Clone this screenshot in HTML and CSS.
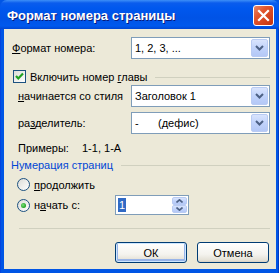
FILE: index.html
```html
<!DOCTYPE html>
<html lang="ru">
<head>
    <meta charset="UTF-8">
    <meta name="viewport" content="width=device-width, initial-scale=1.0">
    <title>Формат номера страницы</title>
    <link rel="stylesheet" href="styles.css">
</head>
<body>

    <div class="window">
        <div class="titlebar">
            <span class="title">Формат номера страницы</span>
            <span class="close-btn">
                <svg width="13" height="13" viewBox="0 0 13 13">
                    <path d="M2 2 L11 11 M11 2 L2 11" stroke="#fff" stroke-width="2.2" stroke-linecap="square"/>
                </svg>
            </span>
        </div>

        <div class="frame">
            <div class="client">

                <div class="row row-format">
                    <span class="label"><u>Ф</u>ормат номера:</span>
                    <div class="combo">
                        <span class="combo-text">1, 2, 3, ...</span>
                        <span class="combo-btn">
                            <svg width="9" height="6" viewBox="0 0 9 6"><path d="M1 1 L4.5 4.5 L8 1" fill="none" stroke="#4d6185" stroke-width="2"/></svg>
                        </span>
                    </div>
                </div>

                <div class="row row-check">
                    <span class="checkbox">
                        <svg width="11" height="11" viewBox="0 0 11 11"><path d="M2 5 L4.3 7.5 L9 2.5" fill="none" stroke="#21a121" stroke-width="2.2"/></svg>
                    </span>
                    <span class="check-text">Включить номер <u>г</u>лавы</span>
                    <span class="etched"></span>
                </div>

                <div class="row row-style">
                    <span class="label label-indent"><u>н</u>ачинается со стиля</span>
                    <div class="combo">
                        <span class="combo-text">Заголовок 1</span>
                        <span class="combo-btn">
                            <svg width="9" height="6" viewBox="0 0 9 6"><path d="M1 1 L4.5 4.5 L8 1" fill="none" stroke="#4d6185" stroke-width="2"/></svg>
                        </span>
                    </div>
                </div>

                <div class="row row-sep">
                    <span class="label label-indent">ра<u>з</u>делитель:</span>
                    <div class="combo">
                        <span class="combo-text"><span class="dash">-</span>(дефис)</span>
                        <span class="combo-btn">
                            <svg width="9" height="6" viewBox="0 0 9 6"><path d="M1 1 L4.5 4.5 L8 1" fill="none" stroke="#4d6185" stroke-width="2"/></svg>
                        </span>
                    </div>
                </div>

                <div class="row row-examples">
                    <span class="examples-label">Примеры:</span>
                    <span>1-1, 1-А</span>
                </div>

                <div class="row row-group">
                    <span class="group-title">Нумерация страниц</span>
                    <span class="etched"></span>
                </div>

                <div class="row row-radio">
                    <span class="radio"></span>
                    <span><u>п</u>родолжить</span>
                </div>

                <div class="row row-radio row-start">
                    <span class="radio radio-on"><span class="dot"></span></span>
                    <span class="radio-label">н<u>а</u>чать с:</span>
                    <div class="spin">
                        <span class="spin-text"><span class="selected">1</span></span>
                        <span class="spin-btns">
                            <span class="spin-btn">
                                <svg width="7" height="4" viewBox="0 0 7 4"><path d="M0.5 3.5 L3.5 0.8 L6.5 3.5" fill="none" stroke="#4d6185" stroke-width="1.6"/></svg>
                            </span>
                            <span class="spin-btn">
                                <svg width="7" height="4" viewBox="0 0 7 4"><path d="M0.5 0.5 L3.5 3.2 L6.5 0.5" fill="none" stroke="#4d6185" stroke-width="1.6"/></svg>
                            </span>
                        </span>
                    </div>
                </div>

                <div class="divider"></div>

                <div class="buttons">
                    <button class="btn btn-default">ОК</button>
                    <button class="btn">Отмена</button>
                </div>

            </div>
        </div>
    </div>

</body>
</html>
```

FILE: styles.css
```css
body {
    margin: 0;
    font-family: "Liberation Sans", Arial, sans-serif;
    font-size: 11px;
    color: #000;
    background: #fff;
}
u {
    text-decoration: underline;
    text-underline-offset: 1px;
}
.window {
    width: 279px;
    height: 273px;
    display: flex;
    flex-direction: column;
    background: #0055e5;
}
.titlebar {
    height: 29px;
    flex: none;
    display: flex;
    align-items: center;
    justify-content: space-between;
    padding: 0 5px 0 7px;
    box-sizing: border-box;
    background: linear-gradient(#3d8ff7 0, #0a5ced 3px, #0058ee 8px, #0053e6 18px, #0059ed 26px, #0046d2 29px);
    border-radius: 7px 7px 0 0;
}
.title {
    color: #fff;
    font-weight: bold;
    font-size: 13px;
    text-shadow: 1px 1px #0a1b7a;
    padding-top: 1px;
}
.close-btn {
    width: 21px;
    height: 21px;
    box-sizing: border-box;
    border: 1px solid #fff;
    border-radius: 3px;
    background: linear-gradient(135deg, #e8886a 0, #e2572f 35%, #d1401b 75%, #c2340e 100%);
    display: flex;
    align-items: center;
    justify-content: center;
    margin-top: 1px;
}
.frame {
    flex: 1;
    display: flex;
    padding: 0 4px 4px 4px;
    background: linear-gradient(90deg, #0831d9 0, #0055e5 1px, #0055e5 calc(100% - 1px), #001ea0 100%);
}
.client {
    flex: 1;
    background: #ece9d8;
    padding: 8px 6px 0 8px;
    display: flex;
    flex-direction: column;
}
.row {
    display: flex;
    align-items: center;
}
.label {
    width: 119px;
    flex: none;
}
.label-indent {
    width: 113px;
    padding-left: 6px;
}
.combo {
    width: 139px;
    height: 22px;
    box-sizing: border-box;
    border: 1px solid #7f9db9;
    background: #fff;
    display: flex;
    align-items: center;
    padding: 1px;
}
.combo-text {
    flex: 1;
    padding-left: 2px;
}
.dash {
    display: inline-block;
    width: 23px;
}
.combo-btn {
    width: 17px;
    height: 18px;
    box-sizing: border-box;
    border: 1px solid #b9cbf3;
    border-radius: 2px;
    background: linear-gradient(#d9e4fd, #c1d3fb 50%, #b4c8f6);
    display: flex;
    align-items: center;
    justify-content: center;
}
.row-check {
    margin-top: 10px;
    height: 15px;
}
.checkbox {
    width: 13px;
    height: 13px;
    box-sizing: border-box;
    border: 1px solid #1c5180;
    background: linear-gradient(135deg, #dcdcd7, #fff);
    display: flex;
    align-items: center;
    justify-content: center;
    margin-left: 1px;
    flex: none;
}
.check-text {
    margin-left: 4px;
    flex: none;
}
.etched {
    flex: 1;
    height: 1px;
    background: #d0d0bf;
    margin-left: 7px;
    margin-top: 2px;
}
.row-style {
    margin-top: 1px;
}
.row-sep {
    margin-top: 5px;
}
.row-examples {
    margin-top: 7px;
    height: 14px;
    padding-left: 6px;
}
.examples-label {
    width: 64px;
}
.row-group {
    margin-top: 3px;
    height: 14px;
}
.group-title {
    color: #0046d5;
    margin-left: -1px;
}
.row-group .etched {
    margin-left: 8px;
    margin-top: 0;
}
.row-radio {
    margin-top: 5px;
    height: 15px;
    padding-left: 5px;
}
.radio {
    width: 13px;
    height: 13px;
    box-sizing: border-box;
    border: 1px solid #1c5180;
    border-radius: 50%;
    background: linear-gradient(135deg, #dcdcd7, #fff);
    margin-right: 4px;
    display: flex;
    align-items: center;
    justify-content: center;
    flex: none;
}
.dot {
    width: 5px;
    height: 5px;
    border-radius: 50%;
    background: radial-gradient(circle at 40% 40%, #7be07b, #21a121 70%);
}
.row-start {
    margin-top: 3px;
    height: 20px;
}
.radio-label {
    width: 81px;
}
.spin {
    width: 74px;
    height: 20px;
    box-sizing: border-box;
    border: 1px solid #7f9db9;
    background: #fff;
    display: flex;
    padding: 1px;
}
.spin-text {
    flex: 1;
    display: flex;
    align-items: center;
    padding-left: 1px;
}
.selected {
    background: #316ac5;
    color: #fff;
    padding: 0 1px;
    line-height: 14px;
}
.spin-btns {
    width: 15px;
    display: flex;
    flex-direction: column;
}
.spin-btn {
    flex: 1;
    border: 1px solid #b9cbf3;
    border-radius: 2px;
    background: linear-gradient(#d9e4fd, #c1d3fb 50%, #b4c8f6);
    display: flex;
    align-items: center;
    justify-content: center;
}
.divider {
    height: 1px;
    background: #d0d0bf;
    margin: 13px 0 0 7px;
}
.buttons {
    display: flex;
    justify-content: flex-end;
    gap: 10px;
    margin-top: 13px;
    padding-right: 1px;
}
.btn {
    width: 72px;
    height: 21px;
    font-family: "Liberation Sans", Arial, sans-serif;
    font-size: 11px;
    color: #000;
    border: 1px solid #003c74;
    border-radius: 3px;
    background: linear-gradient(#fff, #f4f3ee 60%, #e4e1d6 90%, #d6d0c5);
    padding: 0;
}
.btn-default {
    box-shadow: inset 0 0 0 1px #cee7ff, inset 0 -1px 0 2px #98b4e8;
}
```
